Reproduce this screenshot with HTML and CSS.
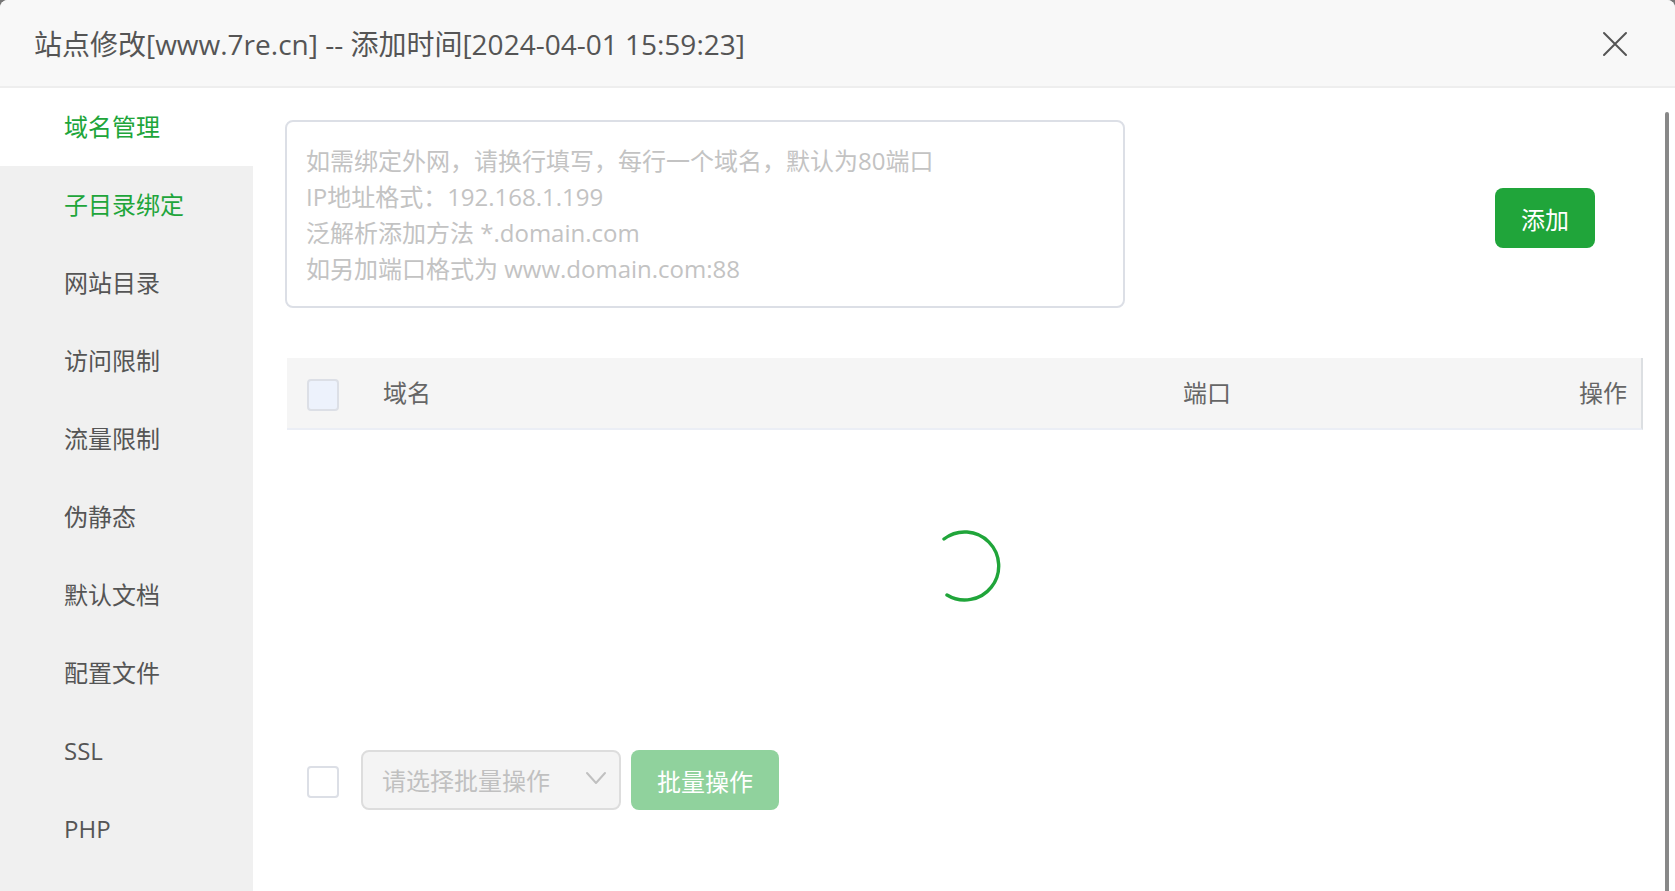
FILE: index.html
```html
<!DOCTYPE html>
<html lang="zh-CN">
<head>
  <meta charset="UTF-8">
  <title>站点修改</title>
  <link rel="stylesheet" href="styles.css">
</head>
<body>
  <div class="dialog">
    <header class="dialog-header">
      <h1 class="dialog-title">站点修改[www.7re.cn] -- 添加时间[2024-04-01 15:59:23]</h1>
      <button type="button" class="close-btn" aria-label="关闭">
        <svg width="26" height="26" viewBox="0 0 26 26" fill="none" stroke="#555" stroke-width="2" stroke-linecap="round">
          <path d="M2 2L24 24M24 2L2 24"/>
        </svg>
      </button>
    </header>

    <div class="dialog-body">
      <nav class="menu">
        <a href="#" class="menu-item active">域名管理</a>
        <a href="#" class="menu-item hover">子目录绑定</a>
        <a href="#" class="menu-item">网站目录</a>
        <a href="#" class="menu-item">访问限制</a>
        <a href="#" class="menu-item">流量限制</a>
        <a href="#" class="menu-item">伪静态</a>
        <a href="#" class="menu-item">默认文档</a>
        <a href="#" class="menu-item">配置文件</a>
        <a href="#" class="menu-item">SSL</a>
        <a href="#" class="menu-item">PHP</a>
      </nav>

      <main class="content">
        <form class="domain-form">
          <textarea class="domain-input" aria-label="域名" placeholder="如需绑定外网，请换行填写，每行一个域名，默认为80端口&#10;IP地址格式：192.168.1.199&#10;泛解析添加方法 *.domain.com&#10;如另加端口格式为 www.domain.com:88"></textarea>
          <button type="button" class="btn">添加</button>
        </form>

        <table class="domain-table">
          <thead>
            <tr>
              <th class="col-check"><input type="checkbox" class="checkbox" aria-label="全选" disabled></th>
              <th class="col-name">域名</th>
              <th class="col-port">端口</th>
              <th class="col-action">操作</th>
            </tr>
          </thead>
          <tbody>
            <tr>
              <td colspan="4" class="loading">
                <svg class="spinner" width="72" height="72" viewBox="0 0 72 72" fill="none" stroke="#20a53a" stroke-width="3.4" stroke-linecap="round">
                  <path d="M15 9A34 34 0 1 1 18 65"/>
                </svg>
              </td>
            </tr>
          </tbody>
        </table>

        <div class="batch">
          <input type="checkbox" class="checkbox" aria-label="全选">
          <div class="select-box">
            <select class="batch-select" aria-label="批量操作" disabled>
              <option>请选择批量操作</option>
            </select>
            <svg class="arrow" width="22" height="14" viewBox="0 0 22 14" fill="none" stroke="#c0c0c0" stroke-width="2" stroke-linecap="round" stroke-linejoin="round">
              <path d="M2 2L11 12L20 2"/>
            </svg>
          </div>
          <button type="button" class="btn" disabled>批量操作</button>
        </div>
      </main>

      <div class="scrollbar"></div>
    </div>
  </div>
</body>
</html>
```

FILE: styles.css
```css
* {
  box-sizing: border-box;
}

html, body {
  padding: 0;
  margin: 0;
  height: 100%;
}

body {
  background: #777;
  color: #555;
  font-family: "Open Sans", "Noto Sans CJK SC", sans-serif;
  font-size: 24px;
  overflow: hidden;
}

button, select, textarea {
  font-family: inherit;
  font-size: inherit;
}

.dialog {
  display: flex;
  flex-direction: column;
  min-height: 100%;
  background: #fff;
  border-radius: 8px 8px 0 0;
  overflow: hidden;
}

.dialog-header {
  display: flex;
  align-items: center;
  justify-content: space-between;
  height: 88px;
  padding: 2px 47px 0 34px;
  background: #f8f8f8;
  border-bottom: 2px solid #eee;
}

.dialog-title {
  margin: 0;
  font-size: 28px;
  font-weight: 400;
  line-height: 40px;
}

.close-btn {
  display: flex;
  padding: 0;
  border: 0;
  background: none;
}

.dialog-body {
  display: flex;
  flex: 1;
}

/* 左侧菜单 */
.menu {
  flex: 0 0 253px;
  background: #f0f0f0;
}

.menu-item {
  display: block;
  height: 78px;
  padding-left: 64px;
  line-height: 78px;
  color: #555;
  text-decoration: none;
}

.menu-item.active {
  background: #fff;
}

.menu-item.active,
.menu-item.hover {
  color: #20a53a;
}

.content {
  flex: 1;
  padding: 32px 22px 0 32px;
}

/* 添加域名 */
.domain-form {
  display: flex;
  align-items: center;
  justify-content: space-between;
  padding-right: 48px;
}

.domain-input {
  width: 65%;
  max-width: 840px;
  height: 188px;
  margin: 0 0 8px;
  padding: 21px 19px 19px;
  border: 2px solid #dcdfe6;
  border-radius: 8px;
  line-height: 36px;
  resize: none;
  overflow: hidden;
}

.domain-input::placeholder {
  color: #c3c3c3;
}

.btn {
  height: 60px;
  padding: 0 26px;
  border: 0;
  border-radius: 8px;
  background: #20a53a;
  color: #fff;
}

.btn:disabled {
  background: #90d29d;
}

/* 域名列表 */
.domain-table {
  width: calc(100% - 2px);
  margin: 42px 0 0 2px;
  border-collapse: separate;
  border-spacing: 0;
  table-layout: fixed;
}

.domain-table th {
  height: 72px;
  padding: 0 20px;
  background: #f5f5f5;
  border-bottom: 2px solid #ebeef5;
  color: #666;
  font-weight: 400;
  line-height: 36px;
  text-align: left;
}

.domain-table .col-check {
  width: 76px;
}

.domain-table .col-name {
  width: 59%;
}

.domain-table .col-action {
  padding-right: 14px;
  border-right: 2px solid #dcdfe2;
  text-align: right;
}

.checkbox {
  display: block;
  appearance: none;
  width: 32px;
  height: 32px;
  margin: 4px 0 0;
  border: 2px solid #dcdfe6;
  border-radius: 4px;
  background: #fff;
}

.checkbox:disabled {
  background: #edf2fc;
}

.loading {
  height: 272px;
  padding: 0;
  text-align: center;
}

.spinner {
  display: block;
  margin: 0 auto;
}

/* 批量操作 */
.batch {
  display: flex;
  align-items: center;
  margin: 48px 0 0 22px;
}

.select-box {
  position: relative;
  width: 260px;
  margin: 0 10px 0 22px;
}

.batch-select {
  display: block;
  appearance: none;
  width: 100%;
  height: 60px;
  padding: 0 19px;
  border: 2px solid #ddd;
  border-radius: 8px;
  background: #f4f4f4;
  color: #c0c0c0;
  opacity: 1;
}

.arrow {
  position: absolute;
  top: 21px;
  right: 14px;
  pointer-events: none;
}

.scrollbar {
  flex: 0 0 4px;
  margin: 24px 6px 0 0;
  border-radius: 2px 2px 0 0;
  background: #888;
}
```
